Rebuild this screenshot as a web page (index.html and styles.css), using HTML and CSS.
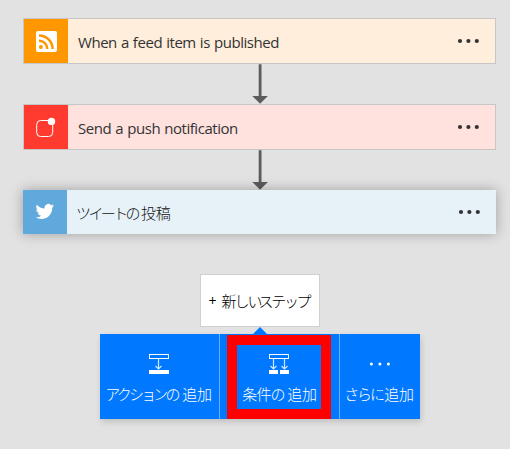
FILE: index.html
```html
<!DOCTYPE html>
<html lang="ja">
<head>
    <meta charset="UTF-8">
    <meta name="viewport" content="width=device-width, initial-scale=1.0">
    <title>Flow</title>
    <link rel="stylesheet" href="styles.css">
</head>
<body>
    <div class="flow">
        <div class="card feed">
            <div class="card-icon">
                <svg width="44" height="44" viewBox="0 0 44 44">
                    <rect x="12" y="12" width="21" height="21" rx="2" fill="#fff"/>
                    <circle cx="16.9" cy="28.1" r="2" fill="#ff9800"/>
                    <path d="M15 21.7a8 8 0 0 1 8.3 8.3M15 16.4a13.6 13.6 0 0 1 13.6 13.6" fill="none" stroke="#ff9800" stroke-width="2.5"/>
                </svg>
            </div>
            <div class="card-title feed-title">When a feed item is published</div>
            <svg class="more" width="24" height="6" viewBox="0 0 24 6"><circle cx="3" cy="3" r="2.1"/><circle cx="11.4" cy="3" r="2.1"/><circle cx="19.8" cy="3" r="2.1"/></svg>
        </div>
        <svg class="arrow" width="16" height="40" viewBox="0 0 16 40"><path d="M6.7 0.3h2.8V32h6.4L8.1 39.7 0.3 32h6.4z"/></svg>
        <div class="card push">
            <div class="card-icon">
                <svg width="44" height="44" viewBox="0 0 44 44">
                    <path d="M24 15.5h-7.3a4 4 0 0 0-4 4v8a4 4 0 0 0 4 4h8a4 4 0 0 0 4-4V20" fill="none" stroke="#fff" stroke-width="1"/>
                    <circle cx="27.5" cy="16.4" r="3.7" fill="#fff"/>
                </svg>
            </div>
            <div class="card-title push-title">Send a push notification</div>
            <svg class="more" width="24" height="6" viewBox="0 0 24 6"><circle cx="3" cy="3" r="2.1"/><circle cx="11.4" cy="3" r="2.1"/><circle cx="19.8" cy="3" r="2.1"/></svg>
        </div>
        <svg class="arrow" width="16" height="40" viewBox="0 0 16 40"><path d="M6.7 0.3h2.8V32h6.4L8.1 39.7 0.3 32h6.4z"/></svg>
        <div class="card tweet">
            <div class="card-icon">
                <svg width="44" height="44" viewBox="0 0 44 44">
                    <path transform="translate(12.6 12.2) scale(.77)" fill="#fff" d="M23.95 4.57a10 10 0 0 1-2.82.77 4.96 4.96 0 0 0 2.16-2.72c-.95.55-2 .95-3.13 1.18a4.92 4.92 0 0 0-8.38 4.48C7.69 8.09 4.07 6.13 1.64 3.16a4.9 4.9 0 0 0 1.52 6.57 4.9 4.9 0 0 1-2.23-.61v.06a4.92 4.92 0 0 0 3.95 4.83 5 5 0 0 1-2.21.08 4.94 4.94 0 0 0 4.6 3.42A9.87 9.87 0 0 1 0 19.54a14 14 0 0 0 7.55 2.21c9.05 0 14-7.5 14-13.98 0-.21 0-.42-.02-.63a9.94 9.94 0 0 0 2.42-2.57z"/>
                </svg>
            </div>
            <div class="card-title ja tweet-title"><span class="kana">ツイートの</span><span class="kanji">投稿</span></div>
            <svg class="more" width="24" height="6" viewBox="0 0 24 6"><circle cx="3" cy="3" r="2.1"/><circle cx="11.4" cy="3" r="2.1"/><circle cx="19.8" cy="3" r="2.1"/></svg>
        </div>

        <div class="new-step ja"><span class="plus">+</span><span class="new">新しい</span><span class="step">ステップ</span></div>
        <svg class="pointer" width="14" height="7" viewBox="0 0 14 7"><path d="M7 0l7 7H0z" fill="#0078ff"/></svg>

        <div class="menu ja">
            <div class="menu-item add-action">
                <svg width="22" height="22" viewBox="0 0 22 22">
                    <rect x="1.5" y="1.5" width="19" height="4" fill="none" stroke="#fff"/>
                    <path d="M1 17h20v4H1z" fill="#fff"/>
                    <path d="M10.5 6v10M7.5 13l3 3 3-3" fill="none" stroke="#d2e7ff" stroke-width="1.2"/>
                </svg>
                <div class="label"><span class="kana">アクションの</span><span class="kanji">追加</span></div>
            </div>
            <div class="menu-item add-condition">
                <div class="highlight">
                    <svg width="22" height="22" viewBox="0 0 22 22">
                        <rect x="1.5" y="1.5" width="19" height="4" fill="none" stroke="#fff"/>
                        <path d="M1 17h9v4H1zM12 17h9v4h-9z" fill="#fff"/>
                        <path d="M5.5 6v10M2.5 13l3 3 3-3M16.5 6v10M13.5 13l3 3 3-3" fill="none" stroke="#d2e7ff" stroke-width="1.2"/>
                    </svg>
                    <div class="label"><span class="kana">条件の</span><span class="kanji">追加</span></div>
                </div>
            </div>
            <div class="menu-item add-more">
                <svg width="22" height="22" viewBox="0 0 22 22" fill="#fff"><circle cx="2.4" cy="11" r="1.5"/><circle cx="10.9" cy="11" r="1.5"/><circle cx="19.4" cy="11" r="1.5"/></svg>
                <div class="label"><span class="kana">さらに</span><span class="kanji">追加</span></div>
            </div>
        </div>
    </div>
</body>
</html>
```
FILE: styles.css
```css
* {
    box-sizing: border-box;
}
body {
    margin: 0;
    height: 449px;
    overflow: hidden;
    background: #e2e2e2;
    color: #333;
    font-family: "Open Sans", "Noto Sans", "Noto Sans CJK JP", sans-serif;
    font-size: 15px;
}
svg {
    display: block;
    flex: none;
}
.flow {
    display: flex;
    flex-direction: column;
    align-items: center;
    width: 473px;
    margin-left: 23px;
    padding-top: 18px;
}
.card {
    display: flex;
    align-items: center;
    width: 473px;
    height: 46px;
    border: 1px solid #c6c6c6;
}
.card-icon {
    width: 44px;
    height: 44px;
}
.card-title {
    flex: 1;
    padding: 2px 0 0 10px;
    line-height: 20px;
    white-space: nowrap;
    letter-spacing: -0.45px;
    word-spacing: 0.6px;
}
.feed {
    background: #ffeedb;
}
.feed .card-icon {
    background: #ff9800;
}
.push {
    background: #ffe1de;
}
.push .card-icon {
    background: #ff3b30;
}
.tweet {
    height: 44px;
    border: none;
    background: #e6f1f8;
    box-shadow: 0 0 12px rgba(0, 0, 0, 0.3);
}
.tweet .card-icon {
    background: #5fa9dd;
}
.more {
    margin-right: 14px;
    fill: #333;
}
.arrow {
    margin-left: 1px;
    fill: #5c5c5c;
}
.ja {
    font-family: "Noto Sans CJK JP", sans-serif;
    font-weight: 300;
}
.ja span {
    display: inline-block;
    white-space: nowrap;
}
.kanji {
    letter-spacing: -0.3px;
}
.tweet-title {
    padding-left: 9px;
    color: #111;
}
.tweet-title .kana {
    width: 65px;
    letter-spacing: -2.6px;
}
.new-step {
    display: flex;
    align-items: center;
    width: 120px;
    height: 53px;
    margin-top: 40px;
    padding-left: 8px;
    border: 1px solid #d0d0d0;
    background: #fff;
    color: #000;
    white-space: nowrap;
}
.plus {
    width: 13px;
    font-family: "Open Sans", sans-serif;
    font-size: 14px;
    font-weight: 400;
}
.new {
    width: 37px;
    letter-spacing: -2px;
}
.step {
    letter-spacing: -2.3px;
}
.pointer {
    margin-left: 1px;
}
.menu {
    display: flex;
    width: 320px;
    height: 85px;
    background: #0078ff;
    color: #fff;
    box-shadow: 1px 3px 6px rgba(0, 0, 0, 0.15);
}
.menu-item {
    display: flex;
    flex-direction: column;
    align-items: center;
    width: 120px;
    padding-top: 19px;
    border-right: 1px solid #6faeff;
}
.label {
    margin-top: 8px;
    line-height: 22px;
    white-space: nowrap;
}
.add-action {
    padding-right: 1px;
}
.add-action .kana {
    width: 77px;
    letter-spacing: -2.8px;
}
.add-condition {
    padding: 1px 0 0;
}
.highlight {
    display: flex;
    flex-direction: column;
    align-items: center;
    width: 104px;
    height: 84px;
    margin-right: 1px;
    padding-top: 8px;
    border: 10px solid #f00;
}
.highlight .label {
    margin-left: 2px;
}
.add-condition .kana {
    width: 45px;
    letter-spacing: -0.9px;
}
.add-more {
    width: 80px;
    border-right: none;
}
.add-more .kana {
    width: 40px;
    letter-spacing: -2.2px;
}
.add-more .label {
    margin-right: 1px;
}
```
